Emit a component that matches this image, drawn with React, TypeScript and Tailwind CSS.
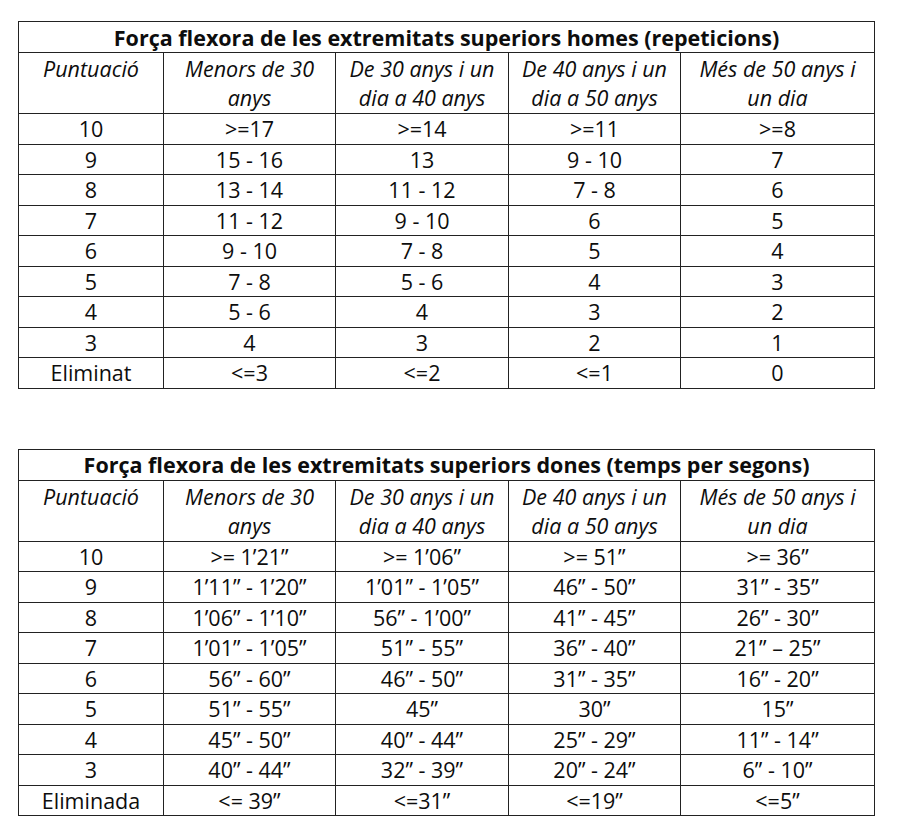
import React from "react";

const headers = [
  "Puntuació",
  "Menors de 30 anys",
  "De 30 anys i un dia a 40 anys",
  "De 40 anys i un dia a 50 anys",
  "Més de 50 anys i un dia",
];

const t1: string[][] = [
  ["10", ">=17", ">=14", ">=11", ">=8"],
  ["9", "15 - 16", "13", "9 - 10", "7"],
  ["8", "13 - 14", "11 - 12", "7 - 8", "6"],
  ["7", "11 - 12", "9 - 10", "6", "5"],
  ["6", "9 - 10", "7 - 8", "5", "4"],
  ["5", "7 - 8", "5 - 6", "4", "3"],
  ["4", "5 - 6", "4", "3", "2"],
  ["3", "4", "3", "2", "1"],
  ["Eliminat", "<=3", "<=2", "<=1", "0"],
];

const t2: string[][] = [
  ["10", ">= 1’21”", ">= 1’06”", ">= 51”", ">= 36”"],
  ["9", "1’11” - 1’20”", "1’01” - 1’05”", "46” - 50”", "31” - 35”"],
  ["8", "1’06” - 1’10”", "56” - 1’00”", "41” - 45”", "26” - 30”"],
  ["7", "1’01” - 1’05”", "51” - 55”", "36” - 40”", "21” – 25”"],
  ["6", "56” - 60”", "46” - 50”", "31” - 35”", "16” - 20”"],
  ["5", "51” - 55”", "45”", "30”", "15”"],
  ["4", "45” - 50”", "40” - 44”", "25” - 29”", "11” - 14”"],
  ["3", "40” - 44”", "32” - 39”", "20” - 24”", "6” - 10”"],
  ["Eliminada", "<= 39”", "<=31”", "<=19”", "<=5”"],
];

function DataTable({ title, rows }: { title: string; rows: string[][] }) {
  return (
    <table className="w-[856px] table-fixed border-collapse text-[#0d0d0d]">
      <colgroup>
        <col className="w-[145px]" />
        <col className="w-[172px]" />
        <col className="w-[173px]" />
        <col className="w-[172px]" />
        <col className="w-[194px]" />
      </colgroup>
      <tbody>
        <tr className="h-[31px]">
          <td
            colSpan={5}
            className="border-[1.5px] border-[#222] p-0 text-center align-middle text-[21.5px] font-bold leading-[27px]"
          >
            {title}
          </td>
        </tr>
        <tr className="h-[61px]">
          {headers.map((h, i) => (
            <td
              key={i}
              className="border-[1.5px] border-[#222] px-1 pt-[1px] pb-0 text-center align-top text-[21.5px] italic leading-[29px]"
            >
              {h}
            </td>
          ))}
        </tr>
        {rows.map((r, ri) => (
          <tr key={ri} className="h-[30.5px]">
            {r.map((c, ci) => (
              <td
                key={ci}
                className="border-[1.5px] border-[#222] p-0 text-center align-middle text-[21.5px] leading-[27px] whitespace-pre"
              >
                {c}
              </td>
            ))}
          </tr>
        ))}
      </tbody>
    </table>
  );
}

export default function App() {
  return (
    <div
      className="min-h-[829px] w-[901px] bg-white pl-[18px] pt-[21px]"
      style={{ fontFamily: '"Open Sans", "Noto Sans", sans-serif' }}
    >
      <DataTable
        title="Força flexora de les extremitats superiors homes (repeticions)"
        rows={t1}
      />
      <div className="h-[60px]" />
      <DataTable
        title="Força flexora de les extremitats superiors dones (temps per segons)"
        rows={t2}
      />
    </div>
  );
}
